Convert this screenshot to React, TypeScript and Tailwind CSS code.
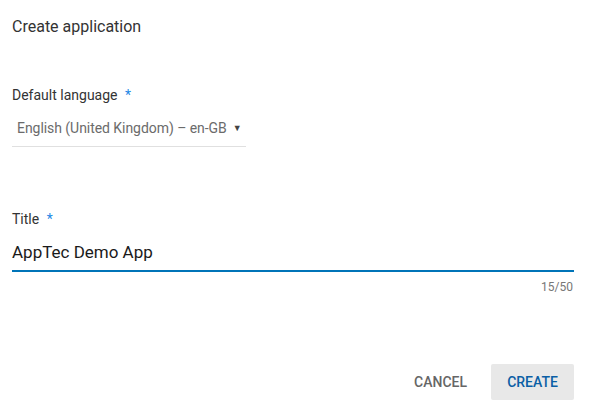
import React from "react";

export default function App() {
  return (
    <div
      className="w-[589px] h-[409px] bg-white flex flex-col pl-3 pr-[15px] text-[#212121]"
      style={{ fontFamily: "Roboto, 'Liberation Sans', sans-serif" }}
    >
      <div className="pt-[17px] h-[52px] text-[16px] leading-5 text-[#333]">Create application</div>

      <div className="mt-[35px] flex flex-col w-[234px]">
        <div className="text-[14px] leading-4 text-[#333]">
          Default language <span className="text-[#1e88e5] ml-1">*</span>
        </div>
        <div className="mt-[15px] flex items-center gap-[6px] pl-[5px] pb-[8px] border-b border-[#e0e0e0]">
          <span className="text-[14px] leading-5 text-[#6b6b6b] tracking-[-0.05px]">English (United Kingdom) – en-GB</span>
          <span className="text-[9px] text-[#444] leading-5">▼</span>
        </div>
      </div>

      <div className="mt-[64px] flex flex-col">
        <div className="text-[14px] leading-4 text-[#333]">
          Title <span className="text-[#1e88e5] ml-1">*</span>
        </div>
        <div className="mt-[13px] pb-[6px] border-b-2 border-[#0074b8] text-[17px] leading-6 text-[#1a1a1a]">
          AppTec Demo App
        </div>
        <div className="mt-[7px] self-end text-[12px] leading-4 text-[#777] pr-[1px]">15/50</div>
      </div>

      <div className="flex-1" />
      <div className="flex justify-end items-center gap-[12px] pb-[9px]">
        <button className="h-9 px-[12px] text-[14px] font-medium text-[#666]">CANCEL</button>
        <button className="h-9 w-[83px] rounded-[2px] bg-[#e8e8e8] text-[14px] font-medium text-[#0b5fa5]">CREATE</button>
      </div>
    </div>
  );
}
